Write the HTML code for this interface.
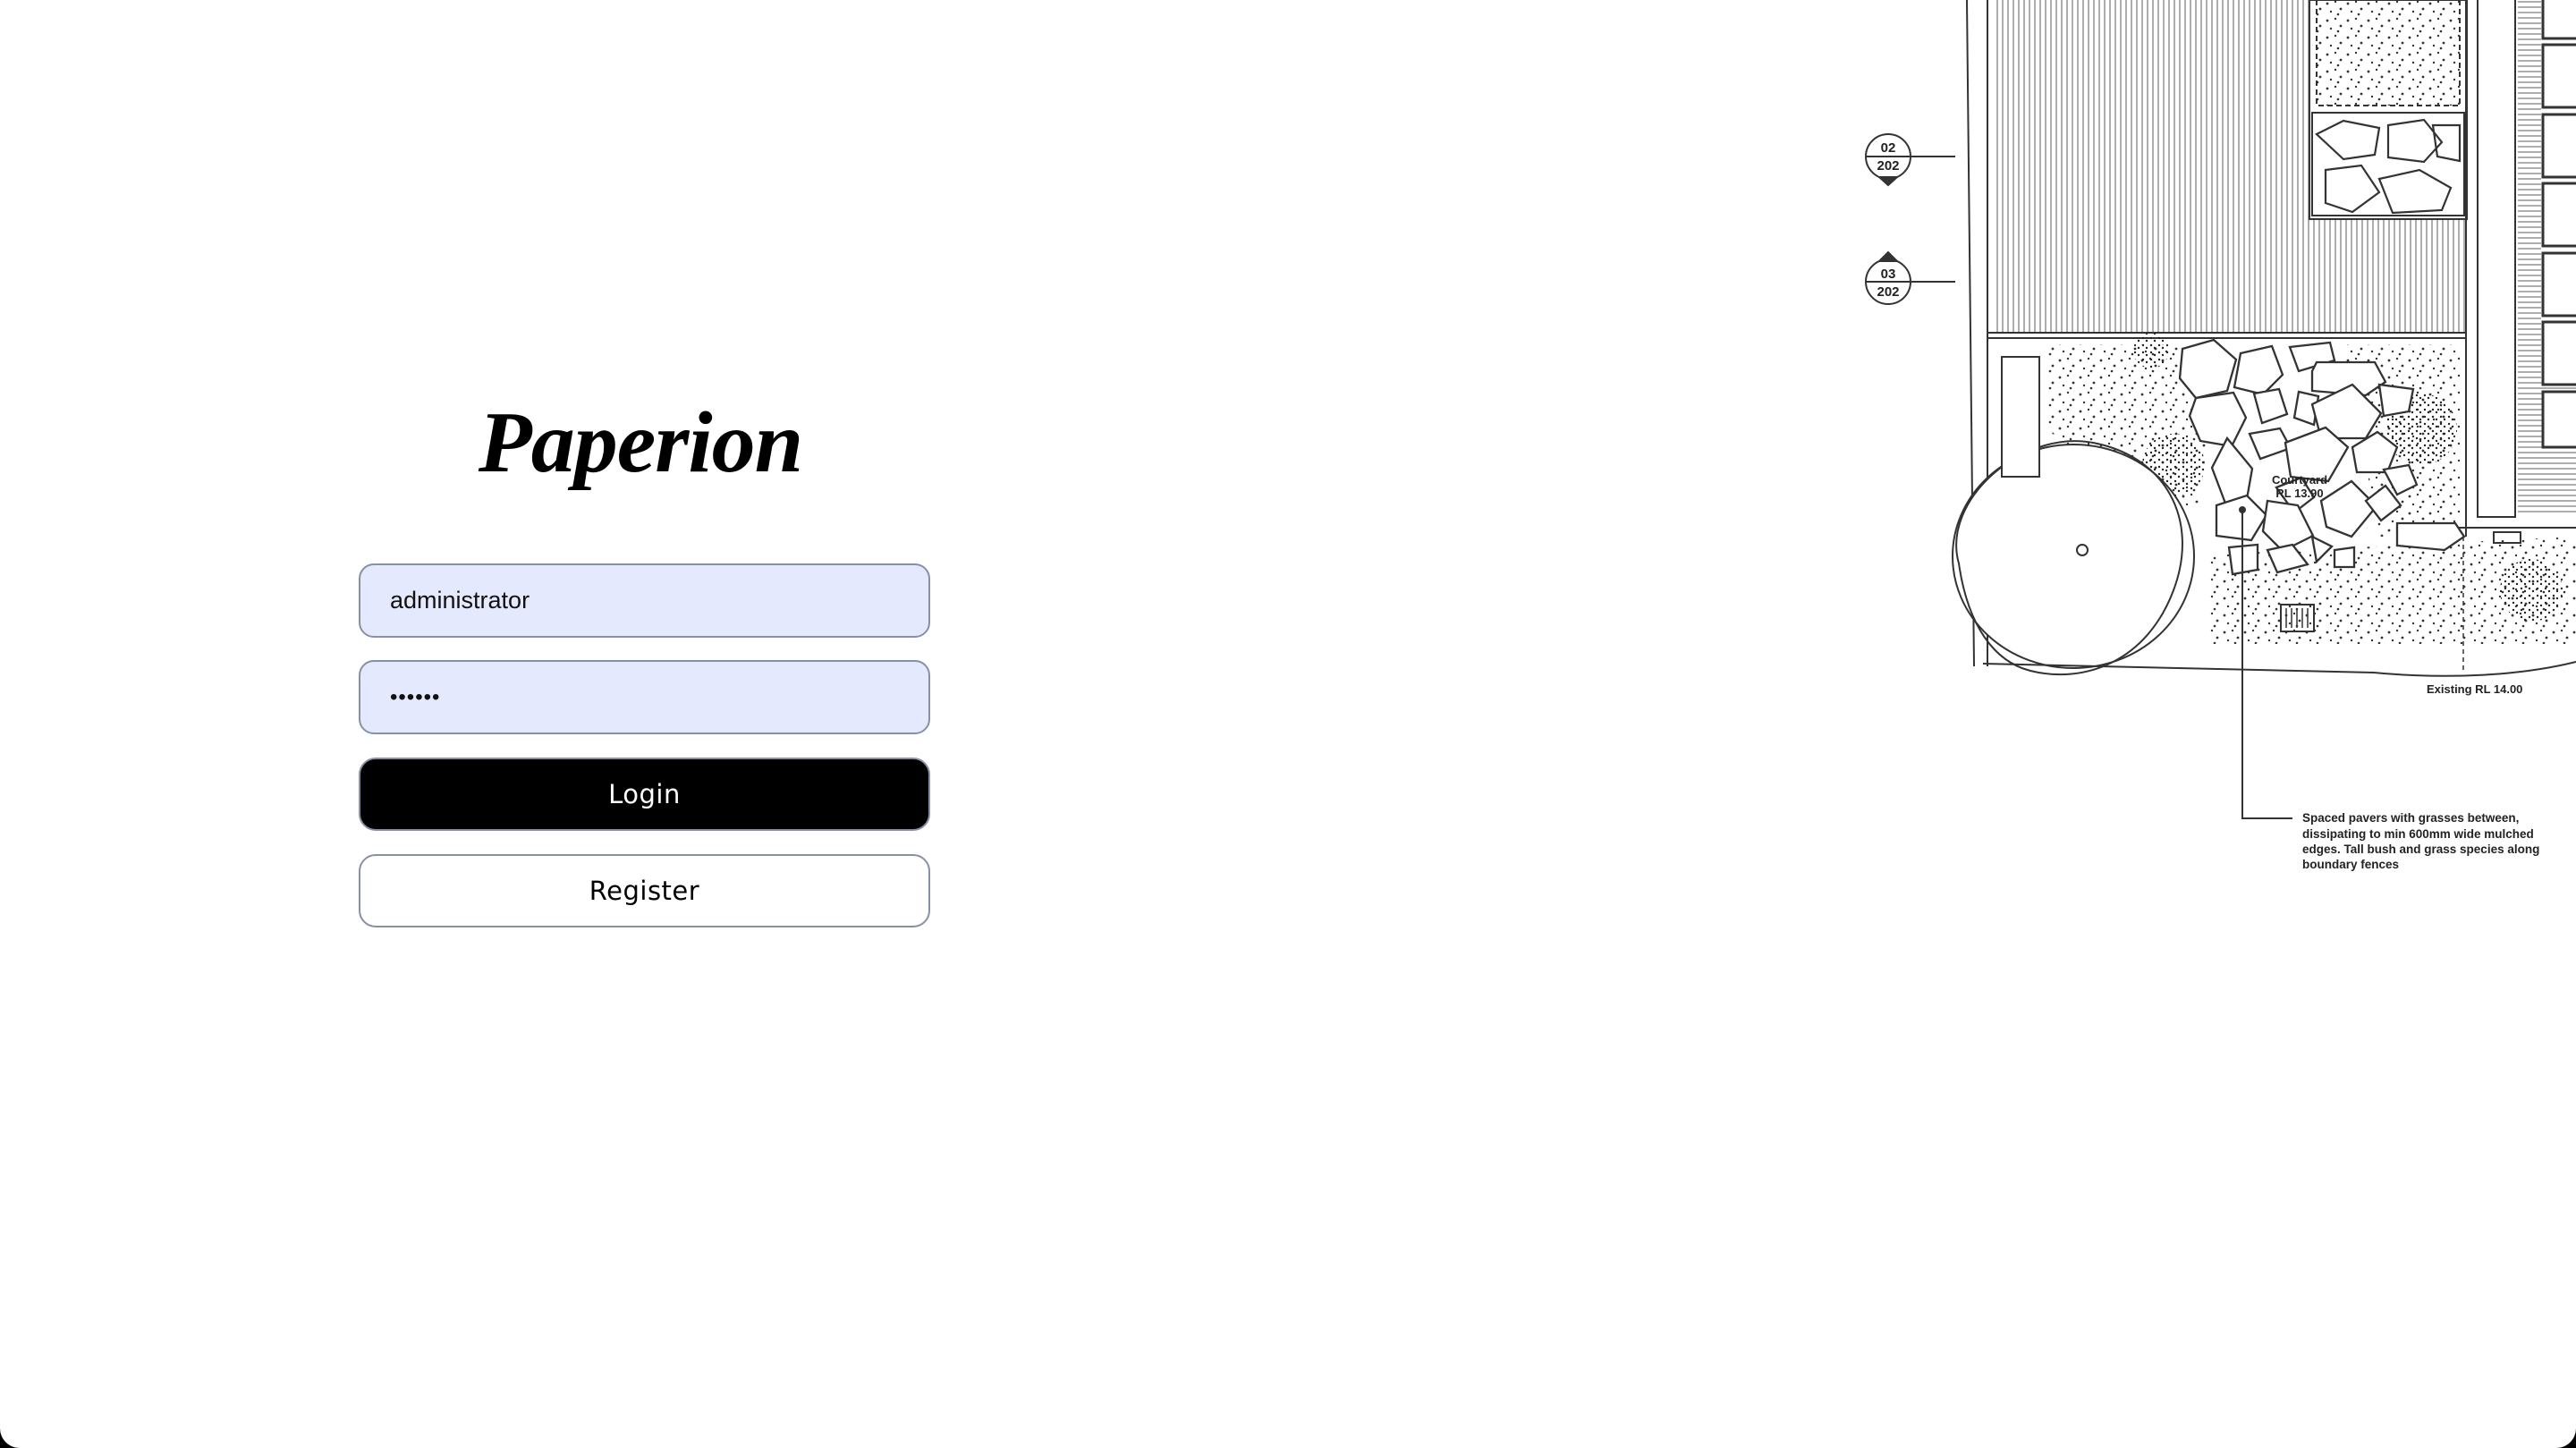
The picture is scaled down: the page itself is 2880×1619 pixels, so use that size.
<!DOCTYPE html>
<html><head><meta charset="utf-8"><style>
html,body{margin:0;padding:0;background:#000;}
.page{position:relative;width:2880px;height:1619px;background:#fff;border-radius:0 0 22px 22px;overflow:hidden;font-family:"Liberation Sans",sans-serif;}
.logo{position:absolute;left:416px;top:420px;width:600px;text-align:center;font-family:"Liberation Serif",serif;font-style:italic;font-weight:bold;font-size:98px;line-height:150px;letter-spacing:-1px;color:#000;}
.inp{position:absolute;left:401px;width:639px;height:83px;box-sizing:border-box;border:2px solid #8890a8;border-radius:17px;background:#e4e9fd;font-size:27px;color:#111;padding-left:33px;line-height:79px;}
.btn{position:absolute;left:401px;width:639px;height:82px;box-sizing:border-box;border:2px solid #8890a8;border-radius:19px;text-align:center;font-size:29px;line-height:78px;letter-spacing:0.5px;font-family:"DejaVu Sans","Liberation Sans",sans-serif;}
svg{position:absolute;left:0;top:0;}
</style></head><body><div class="page">
<div class="logo">Paperion</div>
<div class="inp" style="top:630px">administrator</div>
<div class="inp" style="top:738px;font-size:24px;letter-spacing:1px">••••••</div>
<div class="btn" style="top:847px;background:#000;color:#fff">Login</div>
<div class="btn" style="top:955px;background:#fff;color:#000">Register</div>

<svg width="2880" height="1619" viewBox="0 0 2880 1619">
<defs>
<pattern id="vs" width="6" height="10" patternUnits="userSpaceOnUse"><rect width="6" height="10" fill="#fff"/><line x1="1" y1="0" x2="1" y2="10" stroke="#777" stroke-width="1.2"/></pattern>
<pattern id="hs" width="10" height="6" patternUnits="userSpaceOnUse"><rect width="10" height="6" fill="#fff"/><line x1="0" y1="2" x2="10" y2="2" stroke="#777" stroke-width="1.2"/></pattern>
<pattern id="dots" width="23" height="19" patternUnits="userSpaceOnUse"><circle cx="3" cy="4" r="1.4" fill="#333"/><circle cx="12" cy="2" r="1.2" fill="#333"/><circle cx="18" cy="10" r="1.4" fill="#333"/><circle cx="7" cy="13" r="1.2" fill="#333"/><circle cx="15" cy="16" r="1.3" fill="#333"/></pattern>
<pattern id="dense" width="9" height="8" patternUnits="userSpaceOnUse"><circle cx="2" cy="2" r="1.2" fill="#222"/><circle cx="6" cy="5" r="1.2" fill="#222"/></pattern>
</defs>
<g fill="none" stroke="#333" stroke-width="2">
<rect x="2228" y="0" width="530" height="372" fill="url(#vs)" stroke="none"/>
<rect x="2582" y="0" width="176" height="245" fill="#fff" stroke="#333"/>
<rect x="2590" y="0" width="160" height="118" fill="url(#dots)" stroke="#333" stroke-dasharray="6 4"/>
<rect x="2585" y="126" width="170" height="115" fill="#fff"/>
<g stroke-width="2.2">
<path d="M2590 150 l30 -15 40 8 -5 30 -35 5z M2670 140 l40 -6 20 25 -20 22 -40 -5z M2600 190 l40 -5 20 30 -30 22 -30 -10z M2660 200 l45 -10 35 20 -10 25 -55 3z M2720 140 l30 0 0 40 -25 -5z"/>
</g>
<line x1="2199" y1="0" x2="2207" y2="745"/>
<line x1="2222" y1="0" x2="2222" y2="745"/>
<line x1="2222" y1="372" x2="2758" y2="372"/>
<line x1="2222" y1="378" x2="2758" y2="378"/>
<line x1="2757" y1="0" x2="2757" y2="600"/>
<rect x="2770" y="-2" width="42" height="580" fill="#fff"/>
<rect x="2815" y="0" width="26" height="430" fill="url(#hs)" stroke="none"/>
<rect x="2815" y="425" width="65" height="150" fill="url(#hs)" stroke="none"/>
<g stroke-width="3" fill="#fff">
<rect x="2843" y="-5" width="45" height="48"/><rect x="2843" y="50" width="45" height="70"/><rect x="2843" y="128" width="45" height="70"/><rect x="2843" y="205" width="45" height="70"/><rect x="2843" y="283" width="45" height="70"/><rect x="2843" y="360" width="45" height="70"/><rect x="2843" y="438" width="45" height="62"/>
</g>
<path d="M2747 590 L2880 590"/>
<rect x="2788" y="595" width="30" height="12"/>
<path d="M2290 385 L2440 385 L2470 470 L2460 560 L2420 590 L2330 520 L2290 480Z" fill="url(#dots)" stroke="none"/>
<path d="M2470 620 L2880 600 L2880 720 L2470 720Z" fill="url(#dots)" stroke="none"/>
<path d="M2620 385 L2750 385 L2750 600 L2660 600Z" fill="url(#dots)" stroke="none"/>
<circle cx="2405" cy="392" r="20" fill="url(#dense)" stroke="none"/>
<circle cx="2707" cy="480" r="40" fill="url(#dense)" stroke="none"/>
<circle cx="2830" cy="660" r="35" fill="url(#dense)" stroke="none"/>
<circle cx="2430" cy="520" r="35" fill="url(#dense)" stroke="none"/>
<g fill="#fff" stroke-width="2.3">
<path d="M2440 390 l35 -10 25 22 -10 35 -35 8 -18 -22z"/>
<path d="M2505 395 l35 -8 12 32 -22 22 -32 -8z"/>
<path d="M2560 388 l45 -5 5 20 -40 12z"/>
<path d="M2590 405 l65 0 12 22 -22 15 -60 -5 0 -22z"/>
<path d="M2455 445 l42 -6 14 28 -16 32 -35 -6 -12 -28z"/>
<path d="M2520 440 l28 -5 9 28 -28 10z"/>
<path d="M2570 438 l22 5 -5 32 -22 -8z"/>
<path d="M2585 452 l45 -22 32 32 -17 28 -50 0z"/>
<path d="M2660 430 l38 5 -5 25 -28 5z"/>
<path d="M2515 485 l34 -6 12 22 -34 12z"/>
<path d="M2555 495 l45 -17 25 22 -22 38 -42 -5z"/>
<path d="M2630 500 l28 -17 22 17 -11 28 -34 0z"/>
<path d="M2490 490 l28 34 -6 34 -22 10 -17 -45z"/>
<path d="M2545 545 l28 -11 14 22 -22 17z"/>
<path d="M2665 525 l28 -5 9 22 -22 11z"/>
<path d="M2478 565 l34 -11 22 22 -17 28 -39 -5z"/>
<path d="M2535 560 l34 5 17 34 -34 17 -22 -22z"/>
<path d="M2595 560 l34 -22 28 28 -28 34 -28 -11z"/>
<path d="M2645 560 l22 -17 17 22 -22 17z"/>
<path d="M2680 585 l65 0 10 15 -22 15 -53 -5z"/>
<path d="M2585 600 l22 11 -17 17z"/>
<path d="M2535 615 l28 -6 17 22 -34 9z"/>
<path d="M2492 612 l32 -3 0 28 -28 5z"/>
<path d="M2610 615 l22 -3 0 22 -22 0z"/>
</g>
<ellipse cx="2318" cy="622" rx="135" ry="125" fill="#fff"/>
<path d="M2190 630 C2170 560 2260 480 2340 495 C2420 510 2460 580 2430 660 C2400 740 2330 765 2270 750 C2230 740 2200 700 2190 630Z" fill="none"/>
<circle cx="2328" cy="615" r="6"/>
<rect x="2238" y="399" width="42" height="134" fill="#fff"/>
<path d="M2217 742 L2654 752 M2654 752 C2740 760 2820 755 2880 740"/>
<path d="M2754 600 L2754 752" stroke-dasharray="5 4" stroke-width="1.5"/>
<rect x="2550" y="676" width="37" height="30"/>
<path d="M2556 680v22M2562 680v22M2568 680v22M2574 680v22M2580 680v22" stroke-width="1.5"/>
<path d="M2507 568 L2507 915 L2563 915"/>
<circle cx="2507" cy="570" r="3" fill="#333"/>
<circle cx="2111" cy="175" r="25" fill="#fff"/>
<path d="M2086 175 L2186 175"/>
<path d="M2101 198 L2111 207 L2121 198Z" fill="#333"/>
<circle cx="2111" cy="315" r="25" fill="#fff"/>
<path d="M2086 315 L2186 315"/>
<path d="M2101 292 L2111 282 L2121 292Z" fill="#333"/>
</g>
<g font-family="Liberation Sans, sans-serif" font-weight="bold" fill="#222">
<text x="2111" y="170" font-size="15" text-anchor="middle">02</text>
<text x="2111" y="190" font-size="15" text-anchor="middle">202</text>
<text x="2111" y="311" font-size="15" text-anchor="middle">03</text>
<text x="2111" y="331" font-size="15" text-anchor="middle">202</text>
<text x="2571" y="541" font-size="13" text-anchor="middle">Courtyard</text>
<text x="2571" y="556" font-size="13" text-anchor="middle">RL 13.90</text>
<text x="2713" y="775" font-size="13">Existing RL 14.00</text>
<g font-size="13.5">
<text x="2574" y="919">Spaced pavers with grasses between,</text>
<text x="2574" y="937">dissipating to min 600mm wide mulched</text>
<text x="2574" y="954">edges. Tall bush and grass species along</text>
<text x="2574" y="971">boundary fences</text>
</g>
</g>
</svg>
</div></body></html>
